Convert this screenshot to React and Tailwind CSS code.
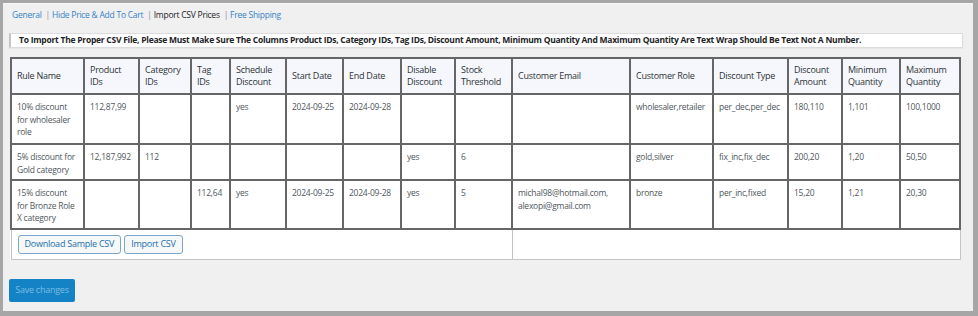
import React from 'react';

const columns = [
  { label: 'Rule Name', w: 'w-[73px]' },
  { label: 'Product IDs', w: 'w-[55px]' },
  { label: 'Category IDs', w: 'w-[52px]' },
  { label: 'Tag IDs', w: 'w-[39px]' },
  { label: 'Schedule Discount', w: 'w-[56px]' },
  { label: 'Start Date', w: 'w-[57px]' },
  { label: 'End Date', w: 'w-[58px]' },
  { label: 'Disable Discount', w: 'w-[54px]' },
  { label: 'Stock Threshold', w: 'w-[57px]' },
  { label: 'Customer Email', w: 'w-[118px]' },
  { label: 'Customer Role', w: 'w-[83px]' },
  { label: 'Discount Type', w: 'w-[75px]' },
  { label: 'Discount Amount', w: 'w-[54px]' },
  { label: 'Minimum Quantity', w: 'w-[58px]' },
  { label: 'Maximum Quantity', w: 'w-[60px]' },
];

const rows = [
  {
    h: 'h-[50px]',
    cells: ['10% discount for wholesaler role', '112,87,99', '', '', 'yes', '2024-09-25', '2024-09-28', '', '', '', 'wholesaler,retailer', 'per_dec,per_dec', '180,110', '1,101', '100,1000'],
  },
  {
    h: 'h-[36px]',
    cells: ['5% discount for Gold category', '12,187,992', '112', '', '', '', '', 'yes', '6', '', 'gold,silver', 'fix_inc,fix_dec', '200,20', '1,20', '50,50'],
  },
  {
    h: 'h-[49px]',
    cells: ['15% discount for Bronze Role X category', '', '', '112,64', 'yes', '2024-09-25', '2024-09-28', 'yes', '5', 'michal98@hotmail.com, alexopi@gmail.com', 'bronze', 'per_inc,fixed', '15,20', '1,21', '20,30'],
  },
];

const tabs = [
  { label: 'General', current: false },
  { label: 'Hide Price & Add To Cart', current: false },
  { label: 'Import CSV Prices', current: true },
  { label: 'Free Shipping', current: false },
];

function App() {
  return (
    <div className="w-[978px] h-[316px] bg-[#a6a6a6] pt-[3px] pl-[3px] pr-[5px] pb-[5px] font-['Open_Sans','Liberation_Sans',sans-serif] tracking-[-0.25px]">
      <div className="h-full bg-[#f0f0f1] border-t border-[#f7f7f7] pl-[6px] pr-[10px]">
        {/* Tabs */}
        <div className="flex items-center h-[23px] pl-[3px] text-[8.5px] text-[#2271b1]">
          {tabs.map((t, i) => (
            <span key={t.label} className="flex items-center">
              {i > 0 && <span className="text-[#8c8f94] ml-[4px] mr-[2px]">|</span>}
              <span className={t.current ? 'text-[#1d2327]' : 'text-[#3582c4]'}>{t.label}</span>
            </span>
          ))}
        </div>

        {/* Notice */}
        <div className="mt-[6px] h-[15px] bg-white border border-[#dcdcde] border-l-[2px] border-l-[#c3c4c7] flex items-center pl-[8px] text-[8.5px] font-bold text-[#1d2327] shadow-[0_1px_1px_rgba(0,0,0,0.04)]">
          To Import The Proper CSV File, Please Must Make Sure The Columns Product IDs, Category IDs, Tag IDs, Discount Amount, Minimum Quantity And Maximum Quantity Are Text Wrap Should Be Text Not A Number.
        </div>

        {/* Table */}
        <table className="mt-[9px] ml-[1px] w-[949px] table-fixed border-collapse bg-white leading-[12.5px]">
          <colgroup>
            {columns.map((c) => (
              <col key={c.label} className={c.w} />
            ))}
          </colgroup>
          <thead>
            <tr className="h-[36px] bg-[#f6f7fc]">
              {columns.map((c) => (
                <th key={c.label} className="border-2 border-[#666] px-[5px] text-left text-[9px] font-normal align-middle text-[#2c3338]">
                  {c.label}
                </th>
              ))}
            </tr>
          </thead>
          <tbody>
            {rows.map((r, ri) => (
              <tr key={ri} className={r.h}>
                {r.cells.map((v, ci) => (
                  <td key={ci} className="border-2 border-[#666] px-[5px] pt-[6px] align-top text-[8.5px] text-[#50575e] break-words">
                    {v}
                  </td>
                ))}
              </tr>
            ))}
            <tr className="h-[30px]">
              <td colSpan={9} className="border border-[#c3c4c7] border-t-0 px-[6px] align-middle">
                <div className="flex gap-[3px]">
                  <button className="h-[19px] px-[6px] rounded-[3px] border border-[#7aa6cf] bg-[#f6f7f7] text-[9px] text-[#2271b1]">
                    Download Sample CSV
                  </button>
                  <button className="h-[19px] px-[6px] rounded-[3px] border border-[#7aa6cf] bg-[#f6f7f7] text-[9px] text-[#2271b1]">
                    Import CSV
                  </button>
                </div>
              </td>
              <td colSpan={6} className="border border-[#c3c4c7] border-t-0" />
            </tr>
          </tbody>
        </table>

        {/* Save */}
        <button className="mt-[19px] h-[23px] w-[66px] rounded-[2px] bg-[#1483c5] text-[9px] text-[#7dbbe4]">
          Save changes
        </button>
      </div>
    </div>
  );
}

export default App;
